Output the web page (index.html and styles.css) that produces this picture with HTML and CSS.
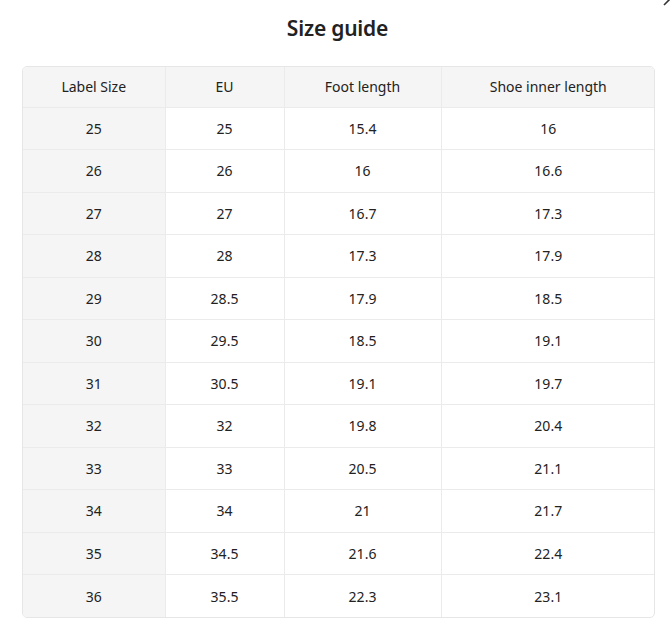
FILE: index.html
```html
<!DOCTYPE html>
<html lang="en">
<head>
<meta charset="utf-8">
<title>Size guide</title>
<link rel="stylesheet" href="styles.css">
</head>
<body>
<div class="dialog">
  <svg class="close" width="20" height="20" viewBox="0 0 20 20"><path d="M2 18 L18 2 M2 2 L18 18" stroke="#333" stroke-width="1.6" fill="none"/></svg>
  <h1 class="title">Size guide</h1>
  <div class="table-wrap">
    <table class="sizes">
      <colgroup>
        <col class="c1"><col class="c2"><col class="c3"><col class="c4">
      </colgroup>
      <thead>
        <tr><th>Label Size</th><th>EU</th><th>Foot length</th><th>Shoe inner length</th></tr>
      </thead>
      <tbody>
        <tr><td>25</td><td>25</td><td>15.4</td><td>16</td></tr>
        <tr><td>26</td><td>26</td><td>16</td><td>16.6</td></tr>
        <tr><td>27</td><td>27</td><td>16.7</td><td>17.3</td></tr>
        <tr><td>28</td><td>28</td><td>17.3</td><td>17.9</td></tr>
        <tr><td>29</td><td>28.5</td><td>17.9</td><td>18.5</td></tr>
        <tr><td>30</td><td>29.5</td><td>18.5</td><td>19.1</td></tr>
        <tr><td>31</td><td>30.5</td><td>19.1</td><td>19.7</td></tr>
        <tr><td>32</td><td>32</td><td>19.8</td><td>20.4</td></tr>
        <tr><td>33</td><td>33</td><td>20.5</td><td>21.1</td></tr>
        <tr><td>34</td><td>34</td><td>21</td><td>21.7</td></tr>
        <tr><td>35</td><td>34.5</td><td>21.6</td><td>22.4</td></tr>
        <tr><td>36</td><td>35.5</td><td>22.3</td><td>23.1</td></tr>
      </tbody>
    </table>
  </div>
</div>
</body>
</html>
```

FILE: styles.css
```css
* { box-sizing: border-box; }
html, body {
  margin: 0;
  padding: 0;
  background: #fff;
}
body {
  font-family: "Noto Sans", "Open Sans", sans-serif;
  color: #222;
  width: 671px;
  height: 632px;
  overflow: hidden;
}
.dialog {
  position: relative;
  padding: 13px 16px 0 22px;
}
.close {
  position: absolute;
  top: -13px;
  right: -11px;
}
.title {
  margin: 0;
  text-align: center;
  font-size: 21px;
  font-weight: 600;
  line-height: 30px;
  color: #222;
  margin-right: 2px;
  letter-spacing: -0.2px;
}
.table-wrap {
  margin-top: 23px;
  width: 633px;
  border: 1px solid #e6e6e6;
  border-radius: 5px;
  overflow: hidden;
}
.sizes {
  width: 100%;
  border-collapse: collapse;
  table-layout: fixed;
  font-size: 14px;
}
.c1 { width: 142px; }
.c2 { width: 119px; }
.c3 { width: 157px; }
.c4 { width: 214px; }
.sizes th, .sizes td {
  text-align: center;
  font-weight: 400;
  border-right: 1px solid #ebebeb;
  border-bottom: 1px solid #ebebeb;
  padding: 0;
}
.sizes th:last-child, .sizes td:last-child { border-right: none; }
.sizes tbody tr:last-child td { border-bottom: none; }
.sizes thead th {
  background: #f5f5f5;
  height: 40px;
  padding-bottom: 1px;
}
.sizes tbody td { height: 42.5px; }
.sizes tbody td:first-child { background: #f5f5f5; }
```
